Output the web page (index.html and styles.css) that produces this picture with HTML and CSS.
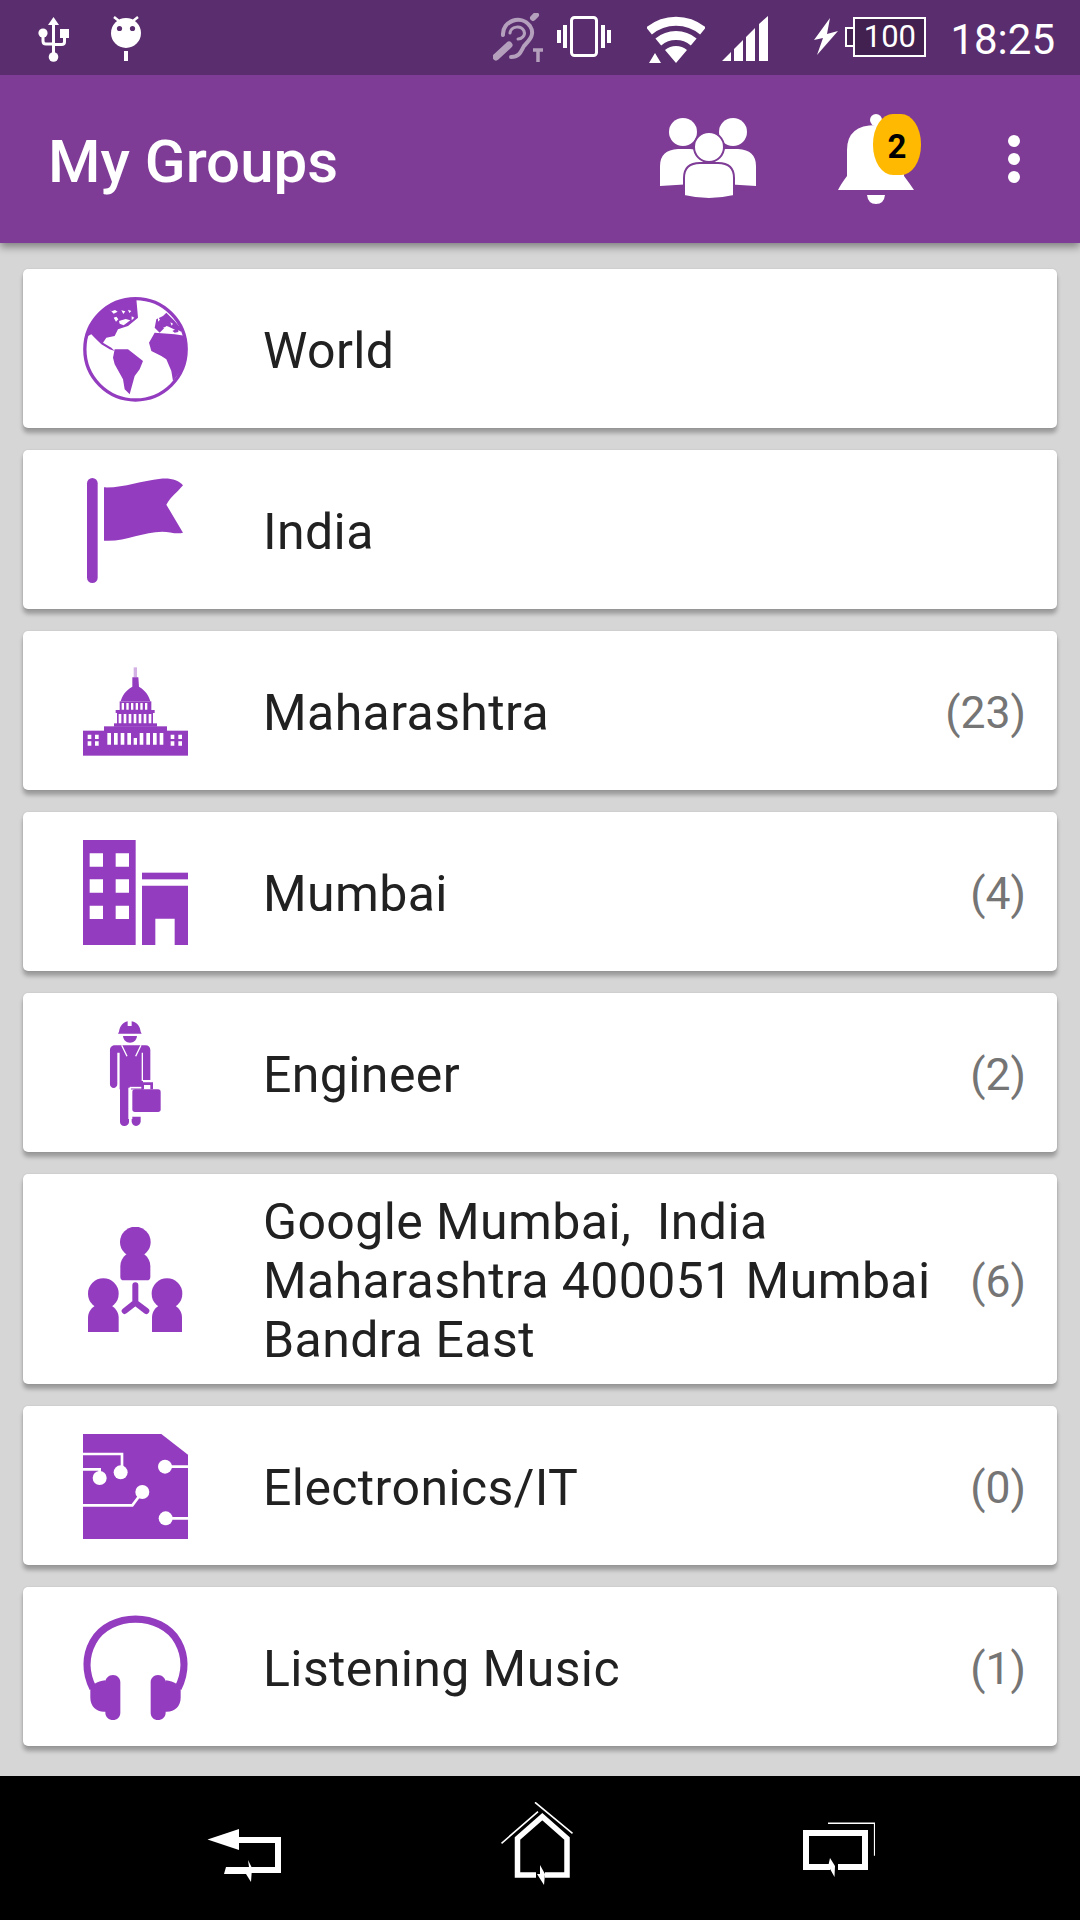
FILE: index.html
```html
<!DOCTYPE html>
<html lang="en">
<head>
<meta charset="utf-8">
<title>My Groups</title>
<link rel="stylesheet" href="styles.css">
</head>
<body>
<div class="phone">
  <div class="statusbar">
    <div class="status-left">
      <svg class="i-usb" viewBox="0 0 31 45"><path d="M15.500 0 21 8h-4v32h-3V8h-4z" fill="#fff"/><circle cx="15.500" cy="40" r="4.800" fill="#fff"/><circle cx="5" cy="16" r="4.600" fill="#fff"/><rect x="22" y="12" width="9" height="9" fill="#fff"/><path d="M5 16v8q0 3 3 3h7.500M26.500 20v5q0 2.500-3 2.500h-8" fill="none" stroke="#fff" stroke-width="3"/></svg>
      <svg class="i-android" viewBox="0 0 30 45"><circle cx="15" cy="17" r="15" fill="#fff"/><circle cx="8.500" cy="12.500" r="2.600" fill="#5a2d6e"/><circle cx="21.500" cy="12.500" r="2.600" fill="#5a2d6e"/><path d="M3 1l5 4M27 1l-5 4" stroke="#fff" stroke-width="2.500"/><rect x="13" y="35" width="4" height="10" fill="#fff"/></svg>
    </div>
    <div class="status-right">
      <svg class="i-ear" viewBox="0 0 52 50"><g fill="none" stroke="#fff" stroke-opacity=".55" stroke-linecap="round"><path d="M10 22C9 8 28 1 37 13c6 9-2 15-6 20-3 5-4 11-13 11" stroke-width="4"/><path d="M17 20c1-7 11-8 14-2 2 5-3 8-6 8" stroke-width="3"/><path d="M3 44 16 32" stroke-width="7"/><path d="M40 5l3-3" stroke-width="6"/><path d="M45 37v12M40 37h10" stroke-width="3.500" stroke-linecap="butt"/></g></svg>
      <svg class="i-vib" viewBox="0 0 54 41"><rect x="14.500" y="1.500" width="25" height="38" rx="3" fill="none" stroke="#fff" stroke-width="3"/><path d="M0 14h4v13H0zM6 9h4v23H6zM44 9h4v23h-4zM50 14h4v13h-4z" fill="#fff"/></svg>
      <svg class="i-wifi" viewBox="0 0 58 47"><g fill="none" stroke="#fff"><path d="M2 15A42 42 0 0 1 56 15" stroke-width="9"/><path d="M11.300 26A27.500 27.500 0 0 1 46.700 26" stroke-width="9"/></g><path d="M29 47 18 34A17 17 0 0 1 40 34zM2 47l6-10 6 10z" fill="#fff"/></svg>
      <svg class="i-signal" viewBox="0 0 46 45"><path d="M0 45 9 36v9zM12 33l9-9v21h-9zM24 21l9-9v33h-9zM37 8l9-8v45h-9z" fill="#fff"/></svg>
      <div class="batt-group">
        <svg class="i-bolt" viewBox="0 0 24 37"><path d="M16 0 0 22l9-2-6 17 21-24-11 3z" fill="#fff"/></svg>
        <div class="battery"><span class="batt-nub"></span><span class="batt-body">100</span></div>
      </div>
      <span class="clock">18:25</span>
    </div>
  </div>

  <header class="appbar">
    <h1 class="title">My Groups</h1>
    <div class="actions">
      <svg class="i-group" viewBox="0 0 96 82"><circle cx="23" cy="14" r="14" fill="#fff"/><circle cx="73" cy="14" r="14" fill="#fff"/><path d="M0 68V48q0-16 18-17h12q18 1 18 17v17zM96 68V48q0-16-18-17H66q-18 1-18 17v17z" fill="#fff"/><circle cx="49" cy="29" r="15" fill="#fff" stroke="#7e3c96" stroke-width="2"/><path d="M24 78V60q0-15 16-15h18q16 0 16 15v18q-25 6-50 0z" fill="#fff" stroke="#7e3c96" stroke-width="2"/></svg>
      <div class="bell-wrap">
        <svg class="i-bell" viewBox="0 0 77 90"><circle cx="38" cy="6" r="6" fill="#fff"/><path d="M0 76q3-6 9-14V36Q9 11 38 11q28 0 28 25v26q6 8 10 14zM29 81h18q-1 9-9 9t-9-9z" fill="#fff"/></svg>
        <span class="badge">2</span>
      </div>
      <svg class="i-more" viewBox="0 0 12 48"><circle cx="6" cy="6" r="6" fill="#fff"/><circle cx="6" cy="24" r="6" fill="#fff"/><circle cx="6" cy="42" r="6" fill="#fff"/></svg>
    </div>
  </header>

  <main class="list">
    <article class="card">
      <svg class="card-icon" viewBox="0 0 315 315"><defs><clipPath id="g"><circle cx="157.500" cy="157" r="155"/></clipPath></defs><g clip-path="url(#g)" fill="#933cbf"><path d="M160 5 165 62 135 87 105 97 95 117 70 122 60 137 85 152 95 162 80 157 55 142 35 122 25 112 15 117 5 100 40 30 90 10Z"/><path d="M95 157 135 157 180 192 170 217 155 237 140 292 125 277 120 247 95 202 90 182Z"/><path d="M198 137 215 107 275 112 310 117 315 152 300 212 270 252 265 222 250 187 235 177 205 162Z"/><path d="M215 92 220 67 240 57 250 47 275 72 300 102 275 107 250 87 230 107Z"/><g fill="#fff"><path d="M78 35l8 8 10-4 8 5-12 6zM115 40l12 3-6 8zM135 38l10 4-6 6zM92 62l8-3 6 8-7 7zM108 72l20-6 14 4-20 15-12-5zM146 58l8 4-8 8zM225 60l6 8-6 6zM240 92l14-4 22 10-14 6zM262 76l8 4-4 6zM285 100l8 3-6 4z"/></g></g><circle cx="157.500" cy="157" r="152" fill="none" stroke="#933cbf" stroke-width="10"/></svg>
      <span class="name">World</span>
    </article>
    <article class="card">
      <svg class="card-icon" viewBox="0 0 315 315"><rect x="12" y="0" width="32" height="315" rx="16" fill="#933cbf"/><path d="M63 28c60 2 110-20 170-26 30-3 55 5 67 20-18 22-36 33-50 58l50 84c-18 6-42-3-62-3-60 0-115 32-175 27z" fill="#933cbf"/></svg>
      <span class="name">India</span>
    </article>
    <article class="card">
      <svg class="card-icon" viewBox="0 0 315 315"><g fill="#933cbf"><rect x="152" y="25" width="10" height="30" opacity=".4"/><path d="M148 55h18l2 28c20 12 30 28 34 44H113c4-16 14-32 35-44z"/><rect x="110" y="127" width="95" height="26"/><rect x="98" y="153" width="117" height="9"/><rect x="102" y="162" width="108" height="34"/><rect x="93" y="193" width="129" height="10"/><rect x="63" y="202" width="189" height="15"/><rect x="0" y="215" width="315" height="75"/></g><g fill="#fff"><path d="M116 132h7v20h-7zM130 132h7v20h-7zM144 132h7v20h-7zM158 132h7v20h-7zM172 132h7v20h-7zM186 132h7v20h-7zM107 165h8v28h-8zM122 165h8v28h-8zM137 165h8v28h-8zM152 165h8v28h-8zM167 165h8v28h-8zM182 165h8v28h-8zM197 165h8v28h-8zM73 222h11v35H73zM93 222h11v35H93zM113 222h11v35h-11zM133 222h11v35h-11zM152 237h10v20h-10zM170 222h11v35h-11zM190 222h11v35h-11zM210 222h11v35h-11zM230 222h11v35h-11zM14 227h11v13H14zM36 227h11v13H36zM14 247h11v13H14zM36 247h11v13H36zM263 227h11v13h-11zM286 227h11v13h-11zM263 247h11v13h-11zM286 247h11v13h-11z"/></g></svg>
      <span class="name">Maharashtra</span>
      <span class="count">(23)</span>
    </article>
    <article class="card">
      <svg class="card-icon" viewBox="0 0 315 315"><path fill-rule="evenodd" d="M0 0h158v315H0zM20 40v40h40V40zM98 40v40h40V40zM20 118v40h40v-40zM98 118v40h40v-40zM20 197v40h40v-40zM98 197v40h40v-40z" fill="#933cbf"/><rect x="177" y="98" width="138" height="20" fill="#933cbf"/><path d="M177 137h138v178h-40v-79h-58v79h-40z" fill="#933cbf"/></svg>
      <span class="name">Mumbai</span>
      <span class="count">(4)</span>
    </article>
    <article class="card">
      <svg class="card-icon" viewBox="0 0 315 315"><g fill="#933cbf"><path d="M108 32c2-16 12-28 26-31v14h12V1c16 3 25 15 27 31l3 6h-71z"/><path d="M120 45h42c-2 14-10 20-21 20s-19-6-21-20z"/><path d="M96 73h92c8 0 14 6 14 14v90h-22V205h-42V303c0 7-6 12-14 12s-13-5-13-12V205h-.1V95h-8v95c0 6-5 11-11 11s-11-5-11-11V87c0-8 7-14 15-14z"/><rect x="110" y="90" width="70" height="115"/><path d="M146 287h27v14c0 8-6 14-14 14s-13-6-13-14z"/><path d="M175 205v-21h35v21h-8v-13h-19v13z"/><rect x="148" y="205" width="85" height="68" rx="8"/></g><path d="M116 73 132 106M174 73 158 106M178 95v85" fill="none" stroke="#fff" stroke-width="4"/><path d="M140 200v90h8" fill="none" stroke="#fff" stroke-width="8"/><path d="M140 200h35" fill="none" stroke="#fff" stroke-width="5"/></svg>
      <span class="name">Engineer</span>
      <span class="count">(2)</span>
    </article>
    <article class="card">
      <svg class="card-icon" viewBox="0 0 315 315"><g fill="#933cbf"><circle cx="157" cy="45" r="46"/><path d="M130 82h54c12 10 18 22 18 36v32c0 7-4 10-10 10h-70c-6 0-10-3-10-10v-32c0-14 6-26 18-36z"/><circle cx="61" cy="200" r="46"/><path d="M35 237h52c14 10 20 22 20 36v42H15v-42c0-14 6-26 20-36z"/><circle cx="252" cy="200" r="46"/><path d="M226 237h52c14 10 19 22 19 36v42h-90v-42c0-14 5-26 19-36z"/></g><path d="M157 175v52l-32 25M157 227l33 25" fill="none" stroke="#933cbf" stroke-width="18" stroke-linecap="round" stroke-linejoin="round"/></svg>
      <span class="name">Google Mumbai,&nbsp; India Maharashtra 400051 Mumbai Bandra East</span>
      <span class="count">(6)</span>
    </article>
    <article class="card">
      <svg class="card-icon" viewBox="0 0 315 315"><path d="M0 0h235l80 62v253H0z" fill="#933cbf"/><g fill="none" stroke="#fff" stroke-width="8"><path d="M0 60h117v55M0 106h50v26M0 214h148l30-40M246 98h69M248 253h67"/></g><g fill="#fff"><circle cx="113" cy="115" r="21"/><circle cx="50" cy="132" r="21"/><circle cx="178" cy="174" r="21"/><circle cx="246" cy="98" r="21"/><circle cx="248" cy="253" r="21"/></g></svg>
      <span class="name">Electronics/IT</span>
      <span class="count">(0)</span>
    </article>
    <article class="card">
      <svg class="card-icon" viewBox="0 0 315 315"><path d="M30 220C5 170 8 120 30 80c50-90 205-90 255 0 22 40 25 90 0 140" fill="none" stroke="#933cbf" stroke-width="22"/><g fill="#933cbf"><path d="M67 202c0-12 10-22 23-22s22 10 22 22v91c0 13-10 22-22 22s-23-9-23-22v-3c-25 2-45-15-45-42v-22c0-15 20-28 45-30z"/><path d="M248 202c0-12-10-22-23-22s-22 10-22 22v91c0 13 10 22 22 22s23-9 23-22v-3c25 2 45-15 45-42v-22c0-15-20-28-45-30z"/></g></svg>
      <span class="name">Listening Music</span>
      <span class="count">(1)</span>
    </article>
  </main>

  <nav class="navbar">
    <svg class="i-back" viewBox="0 0 75 53"><path d="M.5 10.500 32 0v21zM32 8h42v36H44v-6h24V14H32z" fill="#fff"/><path d="M17 45l2-7h23l-1-7 4 8-1 14-5-8z" fill="#fff"/></svg>
    <svg class="i-home" viewBox="0 0 72 83"><path d="M35 73H16.500V36.500L41.300 14.700 66 36.500V73H44" fill="none" stroke="#fff" stroke-width="5.500"/><path d="M39 63l5 9-1 11-7-11h3z" fill="#fff"/><path d="M.5 41.300 37 9.700M34 .3l37.500 31" stroke="#fff" stroke-width="1.600" fill="none"/></svg>
    <svg class="i-recent" viewBox="0 0 72 55"><path d="M27 45H3V11h59v34H35" fill="none" stroke="#fff" stroke-width="6"/><path d="M25 1.300h46.700v32.400" fill="none" stroke="#fff" stroke-width="1.600"/><path d="M27 36l5 8-.5 11-5-9H24l1-1z" fill="#fff"/></svg>
  </nav>
</div>
</body>
</html>
```

FILE: styles.css
```css
* { box-sizing: border-box; }
html, body { margin: 0; padding: 0; }
body { font-family: Roboto, "Noto Sans", sans-serif; background: #d6d6d6; }
svg { display: block; flex: none; }

.phone { width: 1080px; height: 1920px; display: flex; flex-direction: column; overflow: hidden; }

.statusbar { height: 75px; flex: none; background: #5a2d6e; display: flex; justify-content: space-between; position: relative; z-index: 3; }
.status-left { display: flex; align-items: flex-start; padding: 16px 0 0 38px; gap: 42px; }
.i-usb { width: 31px; height: 45px; margin-top: 1px; }
.i-android { width: 30px; height: 45px; }
.status-right { display: flex; align-items: flex-start; padding: 13px 25px 0 0; }
.i-ear { width: 52px; height: 50px; margin-right: 12px; }
.i-vib { width: 54px; height: 41px; margin: 3px 36px 0 0; }
.i-wifi { width: 58px; height: 47px; margin: 3px 17px 0 0; }
.i-signal { width: 46px; height: 45px; margin: 3px 46px 0 0; }
.batt-group { display: flex; align-items: flex-start; gap: 7px; margin-right: 24px; }
.i-bolt { width: 24px; height: 37px; margin-top: 5px; }
.battery { display: flex; align-items: center; margin-top: 4px; height: 40px; }
.batt-nub { width: 8px; height: 20px; border: 2px solid #fff; border-right: 0; background: #42204f; }
.batt-body { width: 73px; height: 40px; border: 2px solid #fff; background: #42204f; color: #fff; font-size: 31px; line-height: 36px; text-align: center; }
.clock { color: #fff; font-size: 42px; line-height: 50px; margin-top: 2px; }

.appbar { height: 168px; flex: none; background: #7e3c96; display: flex; align-items: center; justify-content: space-between; box-shadow: 0 4px 8px rgba(0,0,0,.4); position: relative; z-index: 2; padding: 0 60px 0 48px; }
.title { margin: 6px 0 0; color: #fff; font-size: 60px; font-weight: 500; line-height: 70px; }
.actions { display: flex; align-items: center; }
.i-group { width: 96px; height: 82px; margin-right: 82px; }
.bell-wrap { position: relative; width: 77px; height: 90px; margin-right: 93px; }
.i-bell { width: 77px; height: 90px; }
.badge { position: absolute; left: 35px; top: 0; width: 48px; height: 61px; border-radius: 20px / 30px; background: #ffb900; color: #000; font-size: 33px; font-weight: 700; line-height: 66px; text-align: center; }
.i-more { width: 12px; height: 48px; }

.list { flex: 1; display: flex; flex-direction: column; gap: 22px; padding: 26px 23px 0; }
.card { min-height: 159px; background: #fff; border-radius: 5px; box-shadow: 0 5px 4px rgba(0,0,0,.28), 0 0 2px rgba(0,0,0,.12); display: flex; align-items: center; padding: 17px 31px 16px 60px; color: #212121; }
.card-icon { width: 105px; height: 105px; margin-right: 75px; }
.name { flex: 1; font-size: 50px; line-height: 59px; letter-spacing: .4px; margin: 2px 0 -2px; }
.count { flex: none; margin: 2px 0 -2px 20px; font-size: 44.500px; color: #757575; }

.navbar { height: 144px; flex: none; background: #000; display: flex; align-items: flex-start; position: relative; z-index: 1; padding-left: 207px; }
.i-back { width: 75px; height: 53px; margin: 53px 219px 0 0; }
.i-home { width: 72px; height: 83px; margin: 26px 230px 0 0; }
.i-recent { width: 72px; height: 55px; margin-top: 46px; }
```
